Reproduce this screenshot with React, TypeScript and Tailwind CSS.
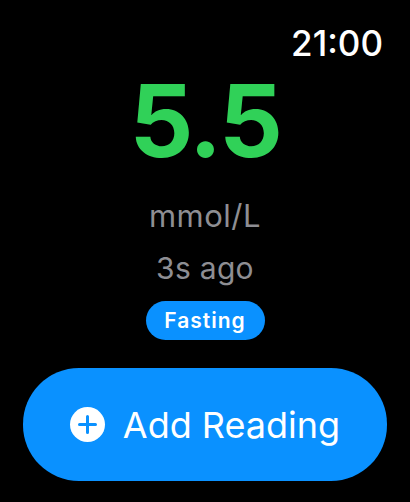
export default function App() {
  return (
    <div
      className="w-[410px] h-[502px] bg-black text-white overflow-hidden flex flex-col"
      style={{ fontFamily: 'Inter, "Noto Sans", sans-serif' }}
    >
      {/* clock */}
      <div className="flex justify-end pt-[23px] pr-[27px]">
        <span className="text-[35px] leading-[40px] font-medium">21:00</span>
      </div>

      {/* reading */}
      <div className="flex flex-col items-center">
        <div className="mt-[8px] text-[100px] leading-[100px] font-bold text-[#30d158] tracking-[-2.5px]">5.5</div>
        <div className="mt-[27px] text-[31px] leading-[36px] text-[#8e8e93] tracking-[0.5px]">mmol/L</div>
        <div className="mt-[16px] text-[30px] leading-[36px] text-[#8e8e93] tracking-[0.3px]">3s ago</div>
        <div className="mt-[15px] h-[39px] w-[119px] rounded-full bg-[#0a91ff] flex items-center justify-center">
          <span className="text-[21px] font-semibold tracking-[1px]">Fasting</span>
        </div>
      </div>

      {/* action */}
      <div className="px-[23px] mt-[28px]">
        <button className="w-full h-[113px] rounded-[56px] bg-[#0a91ff] flex items-center justify-center gap-[18px]">
          <span className="w-[35px] h-[35px] rounded-full bg-white flex items-center justify-center">
            <svg width="19" height="19" viewBox="0 0 19 19">
              <path d="M9.5 1.5v16M1.5 9.5h16" stroke="#0a91ff" strokeWidth="3" strokeLinecap="round" />
            </svg>
          </span>
          <span className="text-[36px] leading-[44px] font-normal">Add Reading</span>
        </button>
      </div>
    </div>
  );
}
